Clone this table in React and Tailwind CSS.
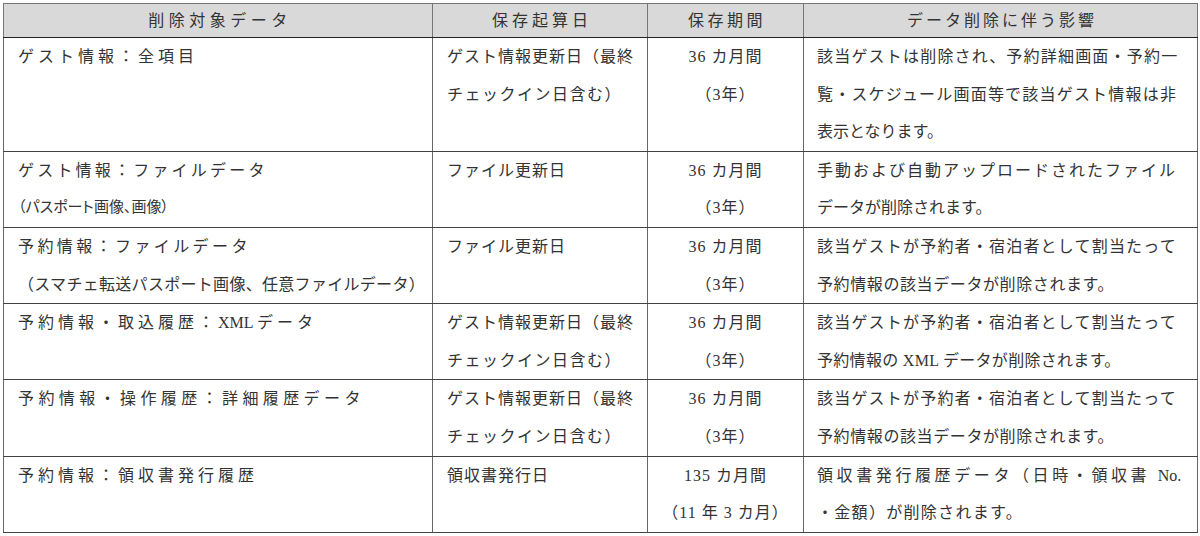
import React from 'react';

// 保存期間テーブル
const rows = [
  {
    target: [['ゲスト情報：全項目', 'tracking-[4px]']],
    start: [['ゲスト情報更新日（最終', 'tracking-[1px]'], ['チェックイン日含む）', 'tracking-[1.5px]']],
    period: ['36 カ月間', '（3年）'],
    effect: [
      ['該当ゲストは削除され、予約詳細画面・予約一', 'tracking-[1.2px]'],
      ['覧・スケジュール画面等で該当ゲスト情報は非', 'tracking-[1.2px]'],
      ['表示となります。', 'tracking-[0px]'],
    ],
  },
  {
    target: [
      ['ゲスト情報：ファイルデータ', 'tracking-[3.2px]'],
      ['（パスポート画像、画像）', 'text-[15px] tracking-[0px] [font-feature-settings:"palt"]'],
    ],
    start: [['ファイル更新日', 'tracking-[1px]']],
    period: ['36 カ月間', '（3年）'],
    effect: [
      ['手動および自動アップロードされたファイル', 'tracking-[2px]'],
      ['データが削除されます。', 'tracking-[0px]'],
    ],
  },
  {
    target: [
      ['予約情報：ファイルデータ', 'tracking-[3.4px]'],
      ['（スマチェ転送パスポート画像、任意ファイルデータ）', 'tracking-[0.3px]'],
    ],
    start: [['ファイル更新日', 'tracking-[1px]']],
    period: ['36 カ月間', '（3年）'],
    effect: [
      ['該当ゲストが予約者・宿泊者として割当たって', 'tracking-[1.2px]'],
      ['予約情報の該当データが削除されます。', 'tracking-[0.6px]'],
    ],
  },
  {
    target: [[<>予約情報・取込履歴：<span className="tracking-[0px]">XML </span>データ</>, 'tracking-[4px]']],
    start: [['ゲスト情報更新日（最終', 'tracking-[1px]'], ['チェックイン日含む）', 'tracking-[1.5px]']],
    period: ['36 カ月間', '（3年）'],
    effect: [
      ['該当ゲストが予約者・宿泊者として割当たって', 'tracking-[1.2px]'],
      ['予約情報の XML データが削除されます。', 'tracking-[0.3px]'],
    ],
  },
  {
    target: [['予約情報・操作履歴：詳細履歴データ', 'tracking-[4.4px]']],
    start: [['ゲスト情報更新日（最終', 'tracking-[1px]'], ['チェックイン日含む）', 'tracking-[1.5px]']],
    period: ['36 カ月間', '（3年）'],
    effect: [
      ['該当ゲストが予約者・宿泊者として割当たって', 'tracking-[1.2px]'],
      ['予約情報の該当データが削除されます。', 'tracking-[0.6px]'],
    ],
  },
  {
    target: [['予約情報：領収書発行履歴', 'tracking-[4px]']],
    start: [['領収書発行日', 'tracking-[1px]']],
    period: ['135 カ月間', '（11 年 3 カ月）'],
    effect: [
      [<>領収書発行履歴データ（日時・領収書 <span className="tracking-[0px]">No.</span></>, 'tracking-[3.6px]'],
      ['・金額）が削除されます。', 'tracking-[1.3px]'],
    ],
  },
];

const Lines = ({ items }) => (
  <>
    {items.map(([text, cls], i) => (
      <div key={i} className={'whitespace-nowrap ' + cls}>{text}</div>
    ))}
  </>
);

export default function App() {
  return (
    <div className="w-[1200px] h-[536px] bg-white pt-[3px] pl-[3px] font-['Liberation_Serif','Noto_Sans_CJK_JP',serif] text-[16px] text-[#333]">
      <table className="w-[1194px] table-fixed border-collapse">
        <colgroup>
          <col className="w-[429px]" />
          <col className="w-[215px]" />
          <col className="w-[156px]" />
          <col className="w-[394px]" />
        </colgroup>
        <thead>
          <tr className="bg-[#d9d9d9] h-[34px]">
            <th className="border border-[#777] border-b-[#222] font-normal leading-[33px] tracking-[4.5px] pl-[4px]">削除対象データ</th>
            <th className="border border-[#777] border-b-[#222] font-normal leading-[33px] tracking-[4px] pl-[4px]">保存起算日</th>
            <th className="border border-[#777] border-b-[#222] font-normal leading-[33px] tracking-[3.5px] pl-[3px]">保存期間</th>
            <th className="border border-[#777] border-b-[#222] font-normal leading-[33px] tracking-[3px] pl-[3px]">データ削除に伴う影響</th>
          </tr>
        </thead>
        <tbody>
          {rows.map((r, i) => (
            <tr key={i}>
              <td className="border border-[#666] border-b-[#444] align-top pl-[14px] leading-[37.6px]">
                <Lines items={r.target} />
              </td>
              <td className="border border-[#666] border-b-[#444] align-top pl-[14px] leading-[37.6px]">
                <Lines items={r.start} />
              </td>
              <td className="border border-[#666] border-b-[#444] align-top text-center leading-[37.6px] tracking-[1px]">
                {r.period.map((p, j) => (
                  <div key={j} className="whitespace-nowrap">{p}</div>
                ))}
              </td>
              <td className="border border-[#666] border-b-[#444] align-top pl-[13px] leading-[37.6px]">
                <Lines items={r.effect} />
              </td>
            </tr>
          ))}
        </tbody>
      </table>
    </div>
  );
}
